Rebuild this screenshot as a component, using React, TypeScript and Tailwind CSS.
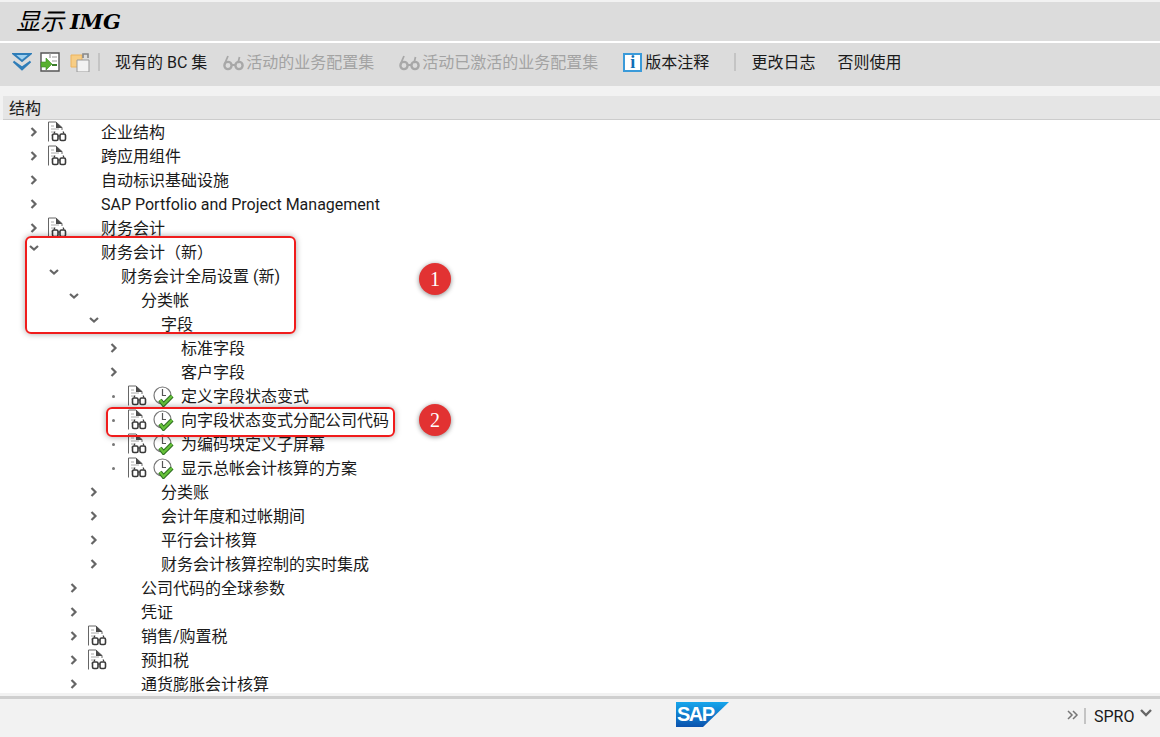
import React from 'react';

const cjk = "font-['Roboto','Noto_Sans_CJK_SC',sans-serif]";

const indents = ['pl-[28px]', 'pl-[48px]', 'pl-[68px]', 'pl-[88px]', 'pl-[108px]'];

type Node = {
  level: number;
  label: string;
  kind: 'closed' | 'open' | 'leaf';
  doc?: boolean;
  clock?: boolean;
};

const rows: Node[] = [
  { level: 0, label: '企业结构', kind: 'closed', doc: true },
  { level: 0, label: '跨应用组件', kind: 'closed', doc: true },
  { level: 0, label: '自动标识基础设施', kind: 'closed' },
  { level: 0, label: 'SAP Portfolio and Project Management', kind: 'closed' },
  { level: 0, label: '财务会计', kind: 'closed', doc: true },
  { level: 0, label: '财务会计（新）', kind: 'open' },
  { level: 1, label: '财务会计全局设置 (新)', kind: 'open' },
  { level: 2, label: '分类帐', kind: 'open' },
  { level: 3, label: '字段', kind: 'open' },
  { level: 4, label: '标准字段', kind: 'closed' },
  { level: 4, label: '客户字段', kind: 'closed' },
  { level: 4, label: '定义字段状态变式', kind: 'leaf', doc: true, clock: true },
  { level: 4, label: '向字段状态变式分配公司代码', kind: 'leaf', doc: true, clock: true },
  { level: 4, label: '为编码块定义子屏幕', kind: 'leaf', doc: true, clock: true },
  { level: 4, label: '显示总帐会计核算的方案', kind: 'leaf', doc: true, clock: true },
  { level: 3, label: '分类账', kind: 'closed' },
  { level: 3, label: '会计年度和过帐期间', kind: 'closed' },
  { level: 3, label: '平行会计核算', kind: 'closed' },
  { level: 3, label: '财务会计核算控制的实时集成', kind: 'closed' },
  { level: 2, label: '公司代码的全球参数', kind: 'closed' },
  { level: 2, label: '凭证', kind: 'closed' },
  { level: 2, label: '销售/购置税', kind: 'closed', doc: true },
  { level: 2, label: '预扣税', kind: 'closed', doc: true },
  { level: 2, label: '通货膨胀会计核算', kind: 'closed' },
];

function Toggle({ kind }: { kind: Node['kind'] }) {
  if (kind === 'leaf') {
    return <span className="ml-[4px] mt-[1px] block h-[3px] w-[3px] rounded-full bg-[#777777]" />;
  }
  if (kind === 'open') {
    return (
      <svg width="12" height="12" viewBox="0 0 12 12" className="mt-[-8px]">
        <path d="M2 4l4 3.5L10 4" fill="none" stroke="#666666" strokeWidth="2.2" />
      </svg>
    );
  }
  return (
    <svg width="12" height="12" viewBox="0 0 12 12">
      <path d="M3.5 2l4 4-4 4" fill="none" stroke="#666666" strokeWidth="2.2" />
    </svg>
  );
}

function Glasses({ color = '#555555' }: { color?: string }) {
  return (
    <svg width="21" height="16" viewBox="0 0 21 16" fill="none" stroke={color} strokeWidth="2.4" className="mr-[2px]">
      <circle cx="5" cy="10.5" r="3.6" />
      <circle cx="16" cy="10.5" r="3.6" />
      <path d="M8.5 10h4M2 8l3-7M15 8l1.5-6" strokeWidth="1.8" />
    </svg>
  );
}

function DocIcon() {
  return (
    <svg width="19" height="21" viewBox="0 0 19 21" fill="none" className="mt-[-1px]">
      <path d="M0.5 20.5V1h7.5l6 5.5V9" stroke="#666666" strokeWidth="1" />
      <path d="M8 1l6.5 6H8z" fill="#4a4a4a" />
      <path d="M3 5h3M3 8h8M3 11h3M3 14h1" stroke="#aaaaaa" strokeWidth="1" />
      <rect x="4.5" y="13" width="5.5" height="6.5" rx="1.5" stroke="#3a3a3a" strokeWidth="1.6" />
      <rect x="12" y="13" width="5.5" height="6.5" rx="1.5" stroke="#3a3a3a" strokeWidth="1.6" />
      <path d="M10 15h2M6 12.5l1-2M16 12.5l-1-2" stroke="#3a3a3a" strokeWidth="1.2" />
    </svg>
  );
}

function ClockCheck() {
  return (
    <svg width="22" height="21" viewBox="0 0 22 21" fill="none">
      <circle cx="9.5" cy="9.5" r="8.5" stroke="#777777" strokeWidth="1.2" fill="#ffffff" />
      <path d="M9.5 3v6.5h3.5" stroke="#555555" strokeWidth="1.2" />
      <path d="M7 14l3.5 4.5L19 10" stroke="#2f6e22" strokeWidth="4.4" />
      <path d="M7 14l3.5 4.5L19 10" stroke="#66c23a" strokeWidth="2.4" />
    </svg>
  );
}

function TreeRow({ node }: { node: Node }) {
  return (
    <div className={`flex h-6 shrink-0 items-center ${indents[node.level]}`}>
      <span className="flex w-5 items-center">
        <Toggle kind={node.kind} />
      </span>
      <span className="flex w-[25px] items-center">{node.doc && <DocIcon />}</span>
      <span className="flex w-7 items-center">{node.clock && <ClockCheck />}</span>
      <span className="mt-[2px] whitespace-nowrap text-base leading-6 text-[#1a1a1a]">{node.label}</span>
    </div>
  );
}

function Toolbar() {
  return (
    <div className="flex h-[43px] shrink-0 items-center bg-[#dcdcdc] pb-[5px] pl-3 text-base">
      <svg width="20" height="20" viewBox="0 0 20 20" fill="none">
        <path d="M1.5 2h17l-8.5 7z" fill="#9fd0ef" stroke="#2f7db8" strokeWidth="2" />
        <path d="M1.5 9.5l8.5 8 8.5-8-8.5 6z" fill="#6fb3de" stroke="#2f7db8" strokeWidth="2" />
      </svg>
      <svg width="20" height="20" viewBox="0 0 20 20" fill="none" className="ml-2">
        <path d="M1 1h18v18H1z" fill="#ffffff" stroke="#555555" strokeWidth="1.4" />
        <path d="M10 1v5M12 5h5M12 9h5" stroke="#999999" strokeWidth="1.2" />
        <path d="M12 13h5" stroke="#3a7d2a" strokeWidth="2" />
        <path d="M1 10h5V6l6 6-6 6v-3H1z" fill="#58b02f" stroke="#3a8a22" strokeWidth="0.6" />
      </svg>
      <svg width="20" height="20" viewBox="0 0 20 20" fill="none" className="ml-[10px]">
        <path d="M1 3h11v12H1z" fill="#f7cd85" stroke="#eeb45c" />
        <path d="M7 8h12v12H7z" fill="#f2f2f2" stroke="#999999" />
        <path d="M13 6V2h5v4" stroke="#888888" strokeWidth="1.6" />
      </svg>
      <span className="ml-2 h-[18px] w-[2px] bg-[#c4c4c4]" />
      <span className="ml-[15px] mt-[2px] whitespace-nowrap">现有的 BC 集</span>
      <span className="ml-4 mt-[2px] flex items-center whitespace-nowrap text-[#a3a3a3]">
        <Glasses color="#a8a8a8" />
        活动的业务配置集
      </span>
      <span className="ml-[25px] mt-[2px] flex items-center whitespace-nowrap text-[#a3a3a3]">
        <Glasses color="#a8a8a8" />
        活动已激活的业务配置集
      </span>
      <span className="ml-[25px] mt-[2px] flex items-center whitespace-nowrap">
        <span className="mr-[3px] mt-[-2px] flex h-[19px] w-[19px] items-center justify-center border-2 border-[#3a9ad9] bg-white font-['Liberation_Serif',serif] text-lg font-bold text-[#0f6fb5]">
          i
        </span>
        版本注释
      </span>
      <span className="ml-[25px] h-[18px] w-[2px] bg-[#c4c4c4]" />
      <span className="ml-[15px] mt-[2px] whitespace-nowrap">更改日志</span>
      <span className="ml-[22px] mt-[2px] whitespace-nowrap">否则使用</span>
    </div>
  );
}

function Footer() {
  return (
    <div className="h-[41px] shrink-0 border-t-[3px] border-[#cfcfcf] bg-[#f2f2f2]">
      <div className="flex h-[34px] w-[1160px] items-center pl-[676px]">
        <svg width="53" height="25" viewBox="0 0 53 25" className="mt-[-3px]">
          <defs>
            <linearGradient id="sapBlue" x1="0" y1="0" x2="0" y2="1">
              <stop offset="0" stopColor="#17a6ec" />
              <stop offset="1" stopColor="#0a52ad" />
            </linearGradient>
          </defs>
          <polygon points="0,0 53,0 27,25 0,25" fill="url(#sapBlue)" />
          <text x="1" y="19" fontFamily="Liberation Sans" fontWeight="700" fontSize="20" fill="#ffffff" textLength="38">
            SAP
          </text>
        </svg>
        <svg width="12" height="12" viewBox="0 0 12 12" fill="none" className="ml-[338px] mt-[-3px]">
          <path d="M1 2l4 4-4 4M6 2l4 4-4 4" stroke="#777777" strokeWidth="1.5" />
        </svg>
        <span className="ml-[5px] h-[16px] w-[2px] bg-[#c4c4c4]" />
        <span className="ml-2 mt-[1px] text-base text-[#1a1a1a]">SPRO</span>
        <svg width="12" height="12" viewBox="0 0 12 12" fill="none" className="ml-[6px] mt-[-6px]">
          <path d="M1 3l5 5 5-5" stroke="#666666" strokeWidth="2.4" />
        </svg>
      </div>
    </div>
  );
}

export default function App() {
  return (
    <div className={`relative flex h-[737px] w-[1160px] flex-col overflow-hidden bg-[#f2f2f2] ${cjk} text-[#1a1a1a]`}>
      {/* title bar */}
      <div className="mt-[2px] flex h-[39px] shrink-0 items-center bg-[#dcdcdc] pl-4 text-2xl italic text-black">
        显示
        <span className="ml-[6px] font-['DejaVu_Serif',serif] text-[21px] font-black">IMG</span>
      </div>
      <div className="h-[2px] shrink-0 bg-white" />
      <Toolbar />

      {/* tree */}
      <div className="ml-[3px] mt-[10px] flex min-h-0 flex-1 flex-col">
        <div className="flex h-6 shrink-0 items-center border-b border-[#cccccc] bg-[#e5e5e5] pl-[6px] pt-[2px] text-base">
          结构
        </div>
        <div className="ml-[-3px] flex h-[573px] flex-col overflow-hidden bg-white pl-0">
          {rows.map((row) => (
            <TreeRow key={row.label} node={row} />
          ))}
        </div>
      </div>

      <Footer />

      {/* red callouts */}
      <div className="absolute left-[25px] top-[236px] h-[98px] w-[271px] rounded-md border-2 border-[#f01c1c] shadow-[0_0_6px_rgba(0,0,0,0.35)]" />
      <div className="absolute left-[106px] top-[407px] h-[30px] w-[289px] rounded-md border-2 border-[#f01c1c] shadow-[0_0_6px_rgba(0,0,0,0.35)]" />
      <div className="absolute left-[419px] top-[263px] flex h-8 w-8 items-center justify-center rounded-full bg-[#e23232] font-['Liberation_Serif',serif] text-xl text-white shadow-[0_1px_5px_rgba(0,0,0,0.45)]">
        1
      </div>
      <div className="absolute left-[419px] top-[404px] flex h-8 w-8 items-center justify-center rounded-full bg-[#e23232] font-['Liberation_Serif',serif] text-xl text-white shadow-[0_1px_5px_rgba(0,0,0,0.45)]">
        2
      </div>
    </div>
  );
}
